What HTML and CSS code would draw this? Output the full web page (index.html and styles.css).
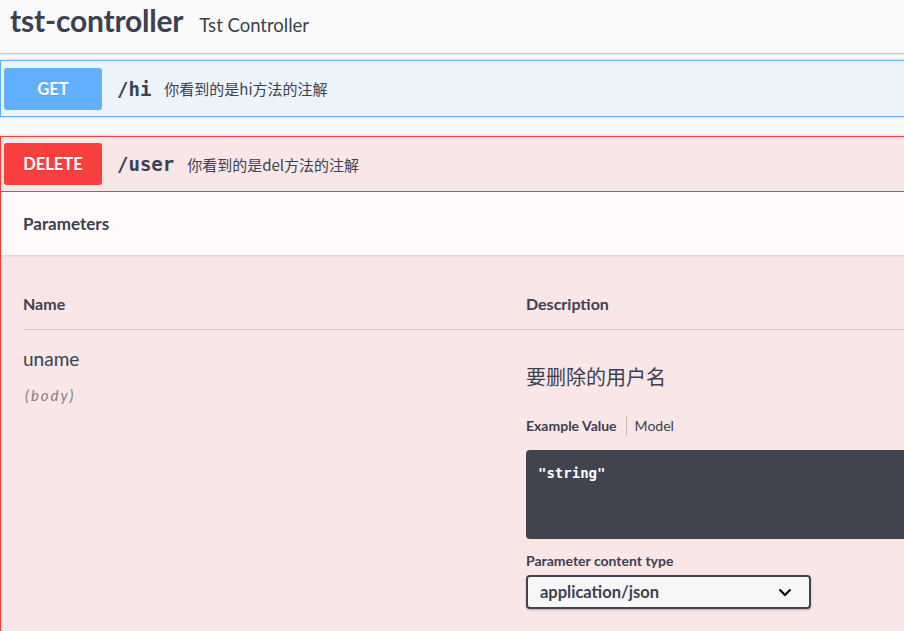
FILE: index.html
```html
<!DOCTYPE html>
<html lang="zh">
<head>
<meta charset="utf-8">
<title>tst-controller</title>
<link rel="stylesheet" href="styles.css">
</head>
<body>
<div class="wrapper">
  <div class="tag-header">
    <span class="tag-name">tst-controller</span>
    <span class="tag-desc">Tst Controller</span>
  </div>

  <div class="opblock opblock-get">
    <div class="summary">
      <span class="method method-get">GET</span>
      <span class="path">/hi</span>
      <span class="summary-desc">你看到的是hi方法的注解</span>
    </div>
  </div>

  <div class="opblock opblock-delete">
    <div class="summary summary-open">
      <span class="method method-delete">DELETE</span>
      <span class="path">/user</span>
      <span class="summary-desc">你看到的是del方法的注解</span>
    </div>
    <div class="section-header">
      <h4 class="section-title">Parameters</h4>
    </div>
    <div class="params">
      <div class="params-head">
        <div class="col-head">Name</div>
        <div class="col-head">Description</div>
      </div>
      <div class="param-row">
        <div class="param-name-col">
          <div class="param-name">uname</div>
          <div class="param-in">(body)</div>
        </div>
        <div class="param-desc-col">
          <div class="param-desc">要删除的用户名</div>
          <div class="tabs">
            <span class="tab tab-active">Example Value</span>
            <span class="tab">Model</span>
          </div>
          <pre class="example">"string"</pre>
          <div class="ctype-label">Parameter content type</div>
          <div class="select">
            <span>application/json</span>
            <svg class="chevron" width="14" height="9" viewBox="0 0 14 9"><path d="M1.5 1.5 L7 7 L12.5 1.5" fill="none" stroke="#000" stroke-width="2.2"/></svg>
          </div>
        </div>
      </div>
    </div>
  </div>
</div>
</body>
</html>
```
FILE: styles.css
```css
html, body {
  margin: 0;
  padding: 0;
  background: #fafafa;
  overflow: hidden;
}
body {
  font-family: "Lato", "Noto Sans CJK SC", sans-serif;
  color: #3b4151;
}
.wrapper {
  width: 960px;
}
.tag-header {
  height: 54px;
  box-sizing: border-box;
  display: flex;
  align-items: baseline;
  padding: 2px 10px 0 10px;
  border-bottom: 1px solid #cbcbcb;
  box-shadow: 0 1px 0 #e6e6e6;
}
.tag-name {
  font-size: 30px;
  font-weight: 700;
  line-height: 36px;
  letter-spacing: -0.2px;
}
.tag-desc {
  font-size: 18.5px;
  margin-left: 16px;
}
.opblock {
  margin-top: 6px;
  border: 1px solid #000;
  box-shadow: 0 0 3px rgba(0, 0, 0, 0.19);
}
.opblock-get {
  background: #ebf3fb;
  border-color: #61affe;
}
.opblock-delete {
  margin-top: 19px;
  background: #f9e6e6;
  border-color: #f93e3e;
}
.summary {
  height: 55px;
  box-sizing: border-box;
  display: flex;
  align-items: center;
  padding: 0 3px;
}
.summary-open {
  height: 55px;
  border-bottom: 1px solid #f93e3e;
}
.method {
  width: 98px;
  height: 42px;
  border-radius: 3px;
  display: flex;
  align-items: center;
  justify-content: center;
  color: #fff;
  font-weight: 700;
  font-size: 16.5px;
  text-shadow: 0 1px 0 rgba(0, 0, 0, 0.1);
}
.method-get {
  background: #61affe;
}
.method-delete {
  background: #f93e3e;
}
.path {
  margin-left: 15px;
  font-family: "DejaVu Sans Mono", monospace;
  font-size: 19px;
  font-weight: 600;
}
.summary-desc {
  margin-left: 13px;
  font-size: 15px;
  font-family: "Noto Sans CJK SC", sans-serif;
}
.section-header {
  height: 63px;
  box-sizing: border-box;
  background: rgba(255, 255, 255, 0.8);
  box-shadow: 0 1px 2px rgba(0, 0, 0, 0.1);
  display: flex;
  align-items: center;
  padding: 0 22px;
}
.section-title {
  margin: 0;
  font-size: 17px;
  font-weight: 700;
}
.params {
  padding: 0 0 80px 22px;
}
.params-head {
  display: grid;
  grid-template-columns: 503px 1fr;
  height: 75px;
  box-sizing: border-box;
  align-items: end;
  padding-bottom: 15px;
  border-bottom: 1px solid rgba(59, 65, 81, 0.2);
}
.col-head {
  font-size: 16px;
  font-weight: 700;
  line-height: 20px;
}
.param-row {
  display: grid;
  grid-template-columns: 503px 1fr;
}
.param-name-col {
  padding-top: 18px;
}
.param-name {
  font-size: 19px;
  line-height: 22px;
}
.param-in {
  margin-top: 16px;
  margin-left: 2px;
  font-size: 15px;
  line-height: 18px;
  font-style: italic;
  color: #808080;
  letter-spacing: 2px;
}
.param-desc-col {
  padding-top: 34px;
}
.param-desc {
  font-size: 20px;
  line-height: 26px;
  font-family: "Noto Sans CJK SC", sans-serif;
}
.tabs {
  margin-top: 26px;
  display: flex;
  align-items: center;
  font-size: 14px;
  line-height: 20px;
}
.tab {
  padding: 0 9px 0 0;
}
.tab-active {
  font-weight: 700;
}
.tab + .tab {
  padding-left: 8px;
  border-left: 1px solid rgba(0, 0, 0, 0.2);
}
.example {
  margin: 14px 0 0 0;
  height: 89px;
  box-sizing: border-box;
  padding: 13px 12px 11px;
  border-radius: 4px;
  background: #41444e;
  color: #fff;
  font-family: "DejaVu Sans Mono", monospace;
  font-weight: 700;
  font-size: 14px;
  line-height: 20px;
}
.ctype-label {
  margin-top: 12px;
  font-size: 14px;
  line-height: 20px;
  font-weight: 700;
}
.select {
  margin-top: 4px;
  width: 285px;
  height: 34px;
  box-sizing: border-box;
  border: 2px solid #41444e;
  border-radius: 4px;
  background: #f7f7f7;
  box-shadow: 0 1px 2px rgba(0, 0, 0, 0.25);
  display: flex;
  align-items: center;
  justify-content: space-between;
  padding: 0 17px 0 12px;
  font-size: 16.5px;
  font-weight: 700;
}
.chevron {
  display: block;
}
```
